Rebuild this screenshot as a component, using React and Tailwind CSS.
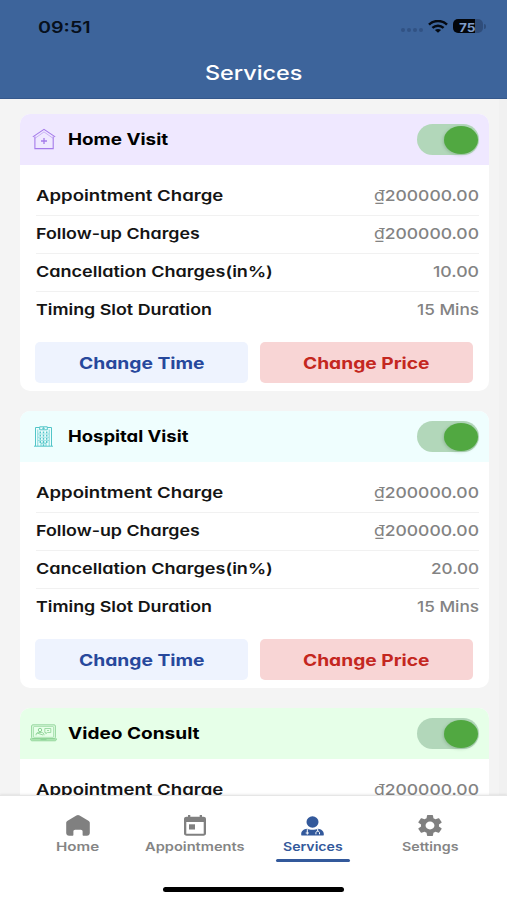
import { useLayoutEffect, useRef, useState } from "react";

// Stretches a line of text to the width of its box
const FitText = ({ children, box, className = "" }) => {
    const ref = useRef(null);
    const [scale, setScale] = useState(1);

    useLayoutEffect(() => {
        setScale(ref.current.parentElement.clientWidth / ref.current.offsetWidth);
    }, [children]);

    return (
        <span className={`block shrink-0 text-left whitespace-nowrap ${box}`}>
            <span
                ref={ref}
                className={`inline-block origin-left ${className}`}
                style={{ transform: `scaleX(${scale})` }}
            >
                {children}
            </span>
        </span>
    );
};

const HomeVisitIcon = () => (
    <svg className="w-6 h-[22px]" viewBox="0 0 24 22" fill="none" stroke="#a57bea" strokeWidth="1.1">
        <path d="M2.9 8.4V20.6H21.2V8.4" />
        <path d="M.8 8.9L12 1.3 23.2 8.9" />
        <path d="M3.2 10.2L12 3.9l8.9 6.3" strokeWidth=".5" />
        <path d="M12 10v6M9 13h6" strokeWidth="1.3" />
    </svg>
);

const HospitalIcon = () => (
    <svg className="w-[19px] h-[21px]" viewBox="0 0 19 21" fill="none" stroke="#52c5c8" strokeWidth="1">
        <path d="M1.5 20V1.5h4.2M13.3 1.5h4.2V20M0 20.2h19M5.7.8h7.6v3H5.7z" />
        <path d="M3.8 3.5V20M15.2 3.5V20" strokeWidth=".7" />
        <path d="M9.5 1v2.6M8 2.3h3" strokeWidth=".8" />
        <path d="M6.3 5.5V17M9.5 5.5V20M12.7 5.5V17" strokeWidth="1.5" strokeDasharray="1.8 1.4" />
        <path d="M4 8h11M4 11.3h11M4 14.5h11" strokeWidth=".5" />
        <path d="M7 20v-2.8h5V20" strokeWidth=".8" />
    </svg>
);

const VideoIcon = () => (
    <svg className="w-[27px] h-[18px]" viewBox="0 0 27 18" fill="none" stroke="#8bd294" strokeWidth="1">
        <rect x="1.7" y=".9" width="23.6" height="13.6" rx="1" />
        <rect x="3.7" y="2.7" width="19.6" height="10.5" strokeWidth=".6" />
        <path d="M.4 14.8h26.2c0 1.3-.7 2-1.8 2H2.2c-1.1 0-1.8-.7-1.8-2z" fill="#b4e8b9" strokeWidth=".8" />
        <path d="M10.5 15.6h6" />
        <circle cx="10" cy="6" r="1.7" />
        <path d="M6 11.3c0-2 1-2.8 2.5-2.8h3c1.6 0 2.5.9 2.5 2.8M7 9l6 2" strokeWidth=".9" />
        <path d="M14.8 4.5h6v4h-3.3l-1.7 1.2V8.5h-1zM17 6.5h2" strokeWidth=".8" />
    </svg>
);

const HomeIcon = () => (
    <svg className="w-6 h-[21px]" viewBox="0 0 24 21" fill="#808080">
        <path d="M10.4.6a3 3 0 0 1 3.2 0l8.8 5.2c.9.5 1.4 1.3 1.4 2.2v10c0 1.6-1.2 2.7-2.9 2.7h-3.2c-.7 0-1.1-.4-1.1-1v-3.2c0-1-.7-1.7-1.8-1.7H9.2c-1.1 0-1.8.7-1.8 1.7v3.2c0 .6-.4 1-1.1 1H3.1C1.4 20.7.2 19.6.2 18V8c0-.9.5-1.7 1.4-2.2z" />
    </svg>
);

const CalendarIcon = () => (
    <svg className="w-[22px] h-[21px]" viewBox="0 0 22 21" fill="#808080" fillRule="evenodd">
        <path d="M4 0h2.3v1.8h9.4V0H18v1.8h1.4C20.9 1.8 22 2.7 22 4v14.6c0 1.3-1.1 2.2-2.6 2.2H2.6C1.1 20.8 0 19.9 0 18.6V4c0-1.3 1.1-2.2 2.6-2.2H4zM2.3 7v11.7h17.4V7z" />
        <rect x="5" y="9.3" width="6" height="5.2" />
    </svg>
);

const DoctorIcon = () => (
    <svg className="w-[23px] h-5" viewBox="0 0 23 20" fill="#33599b">
        <ellipse cx="11.5" cy="6" rx="6" ry="5.7" />
        <path d="M6.2 12.7c1.5.7 3.2 1.1 5.3 1.1s3.8-.4 5.3-1.1c3.7.3 6 2.3 6 5.3v.7c0 .5-.4.9-.9.9H1.1c-.5 0-.9-.4-.9-.9V18c0-3 2.3-5 6-5.3z" />
        <path d="M6.3 13.2v2.5M4.7 17h3.2M6.3 15.4v3.2M16.7 13v2.2M14.9 18.3v-1.4c0-1 .8-1.7 1.8-1.7s1.8.7 1.8 1.7v1.4" fill="none" stroke="#fff" strokeWidth="1" />
    </svg>
);

const GearIcon = () => (
    <svg className="w-6 h-[21px]" viewBox="2 2 20 20" preserveAspectRatio="none" fill="#808080">
        <path d="M19.43 12.98c.04-.32.07-.64.07-.98s-.03-.66-.07-.98l2.11-1.65c.19-.15.24-.42.12-.64l-2-3.46c-.12-.22-.39-.3-.61-.22l-2.49 1c-.52-.4-1.08-.73-1.69-.98l-.38-2.65A.488.488 0 0 0 14 2h-4c-.25 0-.46.18-.49.42l-.38 2.65c-.61.25-1.17.59-1.69.98l-2.49-1c-.23-.09-.49 0-.61.22l-2 3.46c-.13.22-.07.49.12.64l2.11 1.65c-.04.32-.07.65-.07.98s.03.66.07.98l-2.11 1.65c-.19.15-.24.42-.12.64l2 3.46c.12.22.39.3.61.22l2.49-1c.52.4 1.08.73 1.69.98l.38 2.65c.03.24.24.42.49.42h4c.25 0 .46-.18.49-.42l.38-2.65c.61-.25 1.17-.59 1.69-.98l2.49 1c.23.09.49 0 .61-.22l2-3.46c.12-.22.07-.49-.12-.64zM12 15.7a3.7 3.7 0 1 1 0-7.4 3.7 3.7 0 0 1 0 7.4z" />
    </svg>
);

const services = [
    {
        name: "Home Visit",
        box: "w-[100px]",
        icon: <HomeVisitIcon />,
        header: "bg-[#efe8ff]",
        cancellation: "10.00",
        cancellationBox: "w-[46px]",
    },
    {
        name: "Hospital Visit",
        box: "w-[121px]",
        icon: <HospitalIcon />,
        header: "bg-[#effefe]",
        cancellation: "20.00",
        cancellationBox: "w-[48px]",
    },
    {
        name: "Video Consult",
        box: "w-[131px]",
        icon: <VideoIcon />,
        header: "bg-[#e6ffe8]",
        cancellation: "10.00",
        cancellationBox: "w-[46px]",
    },
];

const tabs = [
    { name: "Home", box: "w-[43px]", icon: <HomeIcon /> },
    { name: "Appointments", box: "w-[100px]", icon: <CalendarIcon /> },
    { name: "Services", box: "w-[60px]", icon: <DoctorIcon />, active: true },
    { name: "Settings", box: "w-[57px]", icon: <GearIcon /> },
];

const StatusBar = () => (
    <div className="flex h-[52px] items-center justify-between pl-[38px] pr-[21px]">
        <FitText box="w-[53px]" className="pt-[2px] text-[16px] font-semibold text-[#07101c]">09:51</FitText>
        <div className="flex items-center">
            <div className="mr-[5px] mt-[7px] flex gap-[2px]">
                {[...Array(4)].map((_, i) => (
                    <span key={i} className="size-1 rounded-full bg-[#315284]" />
                ))}
            </div>
            <svg className="mr-[5px] h-[13px] w-5" viewBox="0 0 20 13" fill="none" stroke="#050a12" strokeWidth="2.5">
                <path d="M1 4.7C6-.2 14-.2 19 4.7" />
                <path d="M4.4 7.9c3.2-3 8-3 11.2 0" />
                <path d="M10 12.7L6.9 10c1.7-1.5 4.5-1.5 6.2 0z" fill="#050a12" stroke="none" />
            </svg>
            <div className="flex h-[14px] w-[30px] items-center rounded-[5px] bg-[linear-gradient(90deg,#03060b_75%,#2f4d7b_75%)] pl-[6px]">
                <FitText box="h-[14px] w-[17px] leading-[14px]" className="text-[12px] font-bold text-[#7f9cc8]">75</FitText>
            </div>
            <span className="ml-px h-[5px] w-[2px] rounded-r-full bg-[#2f4d7b]" />
        </div>
    </div>
);

const Row = ({ label, labelBox, value, valueBox, last }) => (
    <div className={`flex h-[38px] items-center justify-between border-b pb-[2px] ${last ? "border-transparent" : "border-[#f1f1f1]"}`}>
        <FitText box={labelBox} className="text-[15px] font-[560] text-[#141414]">{label}</FitText>
        <FitText box={valueBox} className="text-[15px] font-[540] text-[#838383]">{value}</FitText>
    </div>
);

const Price = () => (
    <>
        <span className="font-normal">₫</span>200000.00
    </>
);

const Toggle = () => (
    <div className="flex h-[31px] w-[62px] items-center justify-end rounded-full bg-[#b2d7ba] pr-px">
        <span className="h-7 w-[34px] rounded-[50%] bg-[#51a841] shadow-[-1px_1px_3px_rgba(60,110,60,0.25)]" />
    </div>
);

const ServiceCard = ({ service }) => (
    <div className="h-[277px] shrink-0 overflow-hidden rounded-[10px] bg-white">
        <div className={`flex h-[51px] items-center pr-[10px] ${service.header}`}>
            <div className="mr-px flex w-[47px] justify-center pb-px">{service.icon}</div>
            <FitText box={service.box} className="pb-[2px] text-[16px] font-[650] text-black">{service.name}</FitText>
            <div className="ml-auto">
                <Toggle />
            </div>
        </div>
        <div className="pt-[13px] pr-[10px] pl-4">
            <Row label="Appointment Charge" labelBox="w-[187px]" value={<Price />} valueBox="w-[105px]" />
            <Row label="Follow-up Charges" labelBox="w-[164px]" value={<Price />} valueBox="w-[105px]" />
            <Row
                label="Cancellation Charges(in%)"
                labelBox="w-[237px]"
                value={service.cancellation}
                valueBox={service.cancellationBox}
            />
            <Row label="Timing Slot Duration" labelBox="w-[176px]" value="15 Mins" valueBox="w-[62px]" last />
        </div>
        <div className="mt-[12px] flex gap-3 pl-[15px]">
            <button className="flex h-[41px] w-[213px] items-center justify-center rounded-[5px] bg-[#eef3fe]">
                <FitText box="w-[125px]" className="text-[16px] font-bold text-[#27489c]">Change Time</FitText>
            </button>
            <button className="flex h-[41px] w-[213px] items-center justify-center rounded-[5px] bg-[#f8d5d5]">
                <FitText box="w-[127px]" className="text-[16px] font-bold text-[#c4271f]">Change Price</FitText>
            </button>
        </div>
    </div>
);

const TabBar = () => (
    <nav className="z-10 flex h-[105px] shrink-0 flex-col border-t border-[#e6e6e6] bg-white shadow-[0_-1px_2px_rgba(0,0,0,0.07)]">
        <div className="flex pl-[19px] pr-[18px] pt-[18px]">
            {tabs.map((tab) => (
                <div key={tab.name} className="flex flex-1 flex-col items-center text-[12px] leading-[19px]">
                    <div className="flex h-[23px] items-center">{tab.icon}</div>
                    <FitText
                        box={tab.box}
                        className={`font-semibold ${tab.active ? "text-[#33599b]" : "text-[#858585]"}`}
                    >
                        {tab.name}
                    </FitText>
                    {tab.active && <span className="mt-[3px] h-[3px] w-[74px] rounded-full bg-[#33599b]" />}
                </div>
            ))}
        </div>
        <div className="mx-auto mt-auto mb-2 h-[5px] w-[181px] rounded-full bg-black" />
    </nav>
);

const App = () => {
    return (
        <div className="flex h-[900px] w-[507px] flex-col overflow-hidden bg-[#f4f4f4] font-['Inter','Liberation_Sans',sans-serif] [font-feature-settings:'cv11','ss03']">
            <header className="h-[99px] shrink-0 border-b border-[#35588c] bg-[#3d649b]">
                <StatusBar />
                <div className="flex h-[42px] items-center justify-center">
                    <FitText box="w-[97px]" className="text-[20px] font-[550] text-white">Services</FitText>
                </div>
            </header>
            <main className="flex min-h-0 flex-1 flex-col gap-5 overflow-hidden border-r-8 border-[#f1f1f1] pt-[15px] pr-[10px] pl-5">
                {services.map((service) => (
                    <ServiceCard key={service.name} service={service} />
                ))}
            </main>
            <TabBar />
        </div>
    );
};

export default App;
